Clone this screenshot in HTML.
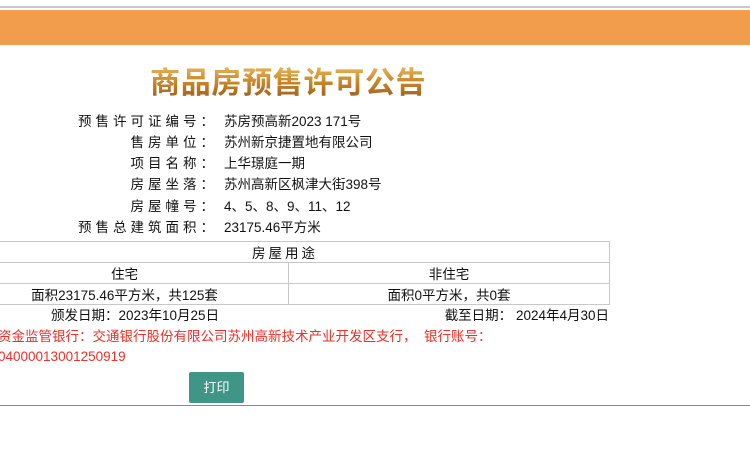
<!DOCTYPE html>
<html><head><meta charset="utf-8"><style>
*{margin:0;padding:0;box-sizing:border-box}
body{width:750px;height:450px;background:#fff;position:relative;overflow:hidden;font-family:"Liberation Sans","Noto Sans CJK SC",sans-serif;font-size:13.5px;color:#111}
.topline{position:absolute;left:0;top:6px;width:750px;height:2px;background:#c8c8c8}
.band{position:absolute;left:0;top:10px;width:750px;height:35px;background:#f29d4b}
.title{position:absolute;left:150px;top:60px;font-size:30px;letter-spacing:0.7px;font-family:"Noto Sans CJK SC",sans-serif;font-weight:bold;background:linear-gradient(#f5c76a,#c9862b 55%,#9a5a1a);-webkit-background-clip:text;background-clip:text;color:transparent;white-space:nowrap;line-height:40px}
.row{position:absolute;left:0;height:21px;line-height:21px;white-space:nowrap}
.row .l{position:absolute;right:-218px;width:300px;text-align:right;letter-spacing:4px}
.row .v{position:absolute;left:224px}
table{position:absolute;left:-40px;top:241px;width:650px;border-collapse:collapse}
td{border:1px solid #c8c8c8;height:21px;text-align:center;font-size:13.5px;padding:0}
.dates{position:absolute;top:306px;height:20px;line-height:20px;white-space:nowrap}
.red{position:absolute;left:-2px;color:#e8322a;white-space:nowrap;line-height:20px}
.btn{position:absolute;left:189px;top:372px;width:55px;height:31px;background:#3f9686;color:#fff;text-align:center;line-height:31px;font-size:13px;border-radius:2px}
.bot{position:absolute;left:0;top:405px;width:750px;height:1px;background:#888}
</style></head><body>
<div class="topline"></div>
<div class="band"></div>
<div class="title">商品房预售许可公告</div>
<div class="row" style="top:111px;width:0"><span class="l">预售许可证编号：</span></div><div class="row" style="top:111px"><span class="v">苏房预高新2023 171号</span></div>
<div class="row" style="top:132px;width:0"><span class="l">售房单位：</span></div><div class="row" style="top:132px"><span class="v">苏州新京捷置地有限公司</span></div>
<div class="row" style="top:153px;width:0"><span class="l">项目名称：</span></div><div class="row" style="top:153px"><span class="v">上华璟庭一期</span></div>
<div class="row" style="top:174px;width:0"><span class="l">房屋坐落：</span></div><div class="row" style="top:174px"><span class="v">苏州高新区枫津大街398号</span></div>
<div class="row" style="top:196px;width:0"><span class="l">房屋幢号：</span></div><div class="row" style="top:196px"><span class="v">4、5、8、9、11、12</span></div>
<div class="row" style="top:217px;width:0"><span class="l">预售总建筑面积：</span></div><div class="row" style="top:217px"><span class="v">23175.46平方米</span></div>
<table>
<tr><td colspan="2" style="letter-spacing:3px">房屋用途</td></tr>
<tr><td style="width:328px">住宅</td><td>非住宅</td></tr>
<tr><td>面积23175.46平方米，共125套</td><td>面积0平方米，共0套</td></tr>
</table>
<div class="dates" style="left:51px">颁发日期：2023年10月25日</div>
<div class="dates" style="right:141px">截至日期： 2024年4月30日</div>
<div class="red" style="top:327px">资金监管银行：交通银行股份有限公司苏州高新技术产业开发区支行， &nbsp;银行账号：</div>
<div class="red" style="top:347px">04000013001250919</div>
<div class="btn">打印</div>
<div class="bot"></div>
</body></html>
